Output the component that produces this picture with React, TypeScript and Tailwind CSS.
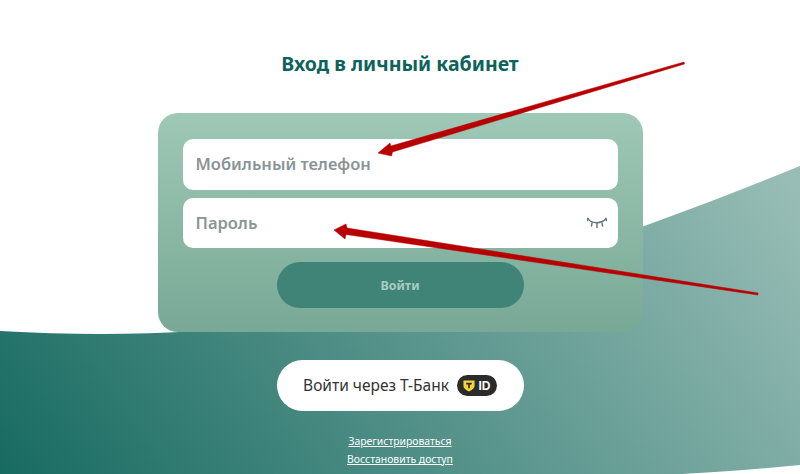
function Wave() {
  return (
    <svg className="absolute inset-0" width="800" height="474" viewBox="0 0 800 474">
      <defs>
        <linearGradient id="wave" x1="0" y1="474" x2="671" y2="4" gradientUnits="userSpaceOnUse">
          <stop offset="0" stopColor="#186b62" />
          <stop offset="1" stopColor="#98bdb6" />
        </linearGradient>
      </defs>
      <path d="M0 331 C70 335 130 335 200 331 C350 320 520 280 800 166 V465 C760 469 720 472 682 474 H0 Z" fill="url(#wave)" />
    </svg>
  );
}

function Arrows() {
  return (
    <svg className="absolute inset-0 pointer-events-none" width="800" height="474" viewBox="0 0 800 474">
      <path d="M684 62 L684.5 64 L392.5 152 L391.5 156 L378 153 L390 143 L390.8 146 Z" fill="#b80000" stroke="#b80000" strokeWidth="0.5" strokeLinejoin="round" />
      <path d="M758 293 L758 295 L346 234.5 L345 239 L334 230 L346 224 L347 228 Z" fill="#b80000" stroke="#b80000" strokeWidth="0.5" strokeLinejoin="round" />
    </svg>
  );
}

function EyeClosed() {
  return (
    <svg width="20" height="12" viewBox="0 0 20 12" fill="none" stroke="#64797f" strokeWidth="1.5" strokeLinecap="round">
      <path d="M1 1.5 C4 7 15 7 19 1.5" />
      <path d="M1 1.5 L0.5 3.5 M19 1.5 L19.5 3.5 M5 6 L4.5 9 M10 6.5 L10 10.5 M15 6 L15.5 9" />
    </svg>
  );
}

function TId() {
  return (
    <span className="flex items-center justify-center gap-[3px] w-[40px] h-[21px] rounded-full bg-[#2b2b2b]">
      <svg width="12" height="12" viewBox="0 0 13 13">
        <path d="M0.5 0.5 H12.5 V6.5 C12.5 9.5 9 11 6.5 12.5 C4 11 0.5 9.5 0.5 6.5 Z" fill="#f5d533" />
        <path d="M3.5 3 H9.5 V4.8 H7.4 V9 H5.6 V4.8 H3.5 Z" fill="#2b2b2b" />
      </svg>
      <span className="text-[12px] leading-none font-bold text-white font-['Liberation_Sans',sans-serif]">ID</span>
    </span>
  );
}

export default function App() {
  return (
    <div className="relative w-[800px] h-[474px] overflow-hidden bg-white font-['Noto_Sans',sans-serif]">
      <Wave />
      <div className="relative flex flex-col items-center pt-[50px]">
        <h1 className="text-[19.5px] leading-[27px] font-bold text-[#0d6259]">Вход в личный кабинет</h1>
        <div className="mt-[36px] w-[485px] h-[219px] rounded-[20px] bg-gradient-to-b from-[#9fc8b6] to-[#78a996] px-[25px] pt-[26px]">
          <div className="flex items-center h-[51px] px-[13px] rounded-[10px] bg-white text-[16.5px] font-semibold text-[#8a9497]">
            Мобильный телефон
          </div>
          <div className="flex items-center justify-between mt-[8px] h-[50px] pl-[13px] pr-[11px] rounded-[10px] bg-white text-[16.5px] font-semibold text-[#8a9497]">
            Пароль
            <EyeClosed />
          </div>
          <button className="block mx-auto mt-[14px] pt-[2px] w-[247px] h-[46px] rounded-full bg-[#3f8476] text-[12.5px] font-bold text-[#a9cbc1]">
            Войти
          </button>
        </div>
        <button className="flex items-center justify-center gap-[8px] mt-[28px] w-[247px] h-[51px] rounded-full bg-white text-[15.5px] text-[#333]">
          Войти через Т-Банк
          <TId />
        </button>
        <a className="mt-[23px] text-[10.4px] leading-[14px] text-white underline">Зарегистрироваться</a>
        <a className="mt-[4px] text-[10.4px] leading-[14px] text-white underline">Восстановить доступ</a>
      </div>
      <Arrows />
    </div>
  );
}
